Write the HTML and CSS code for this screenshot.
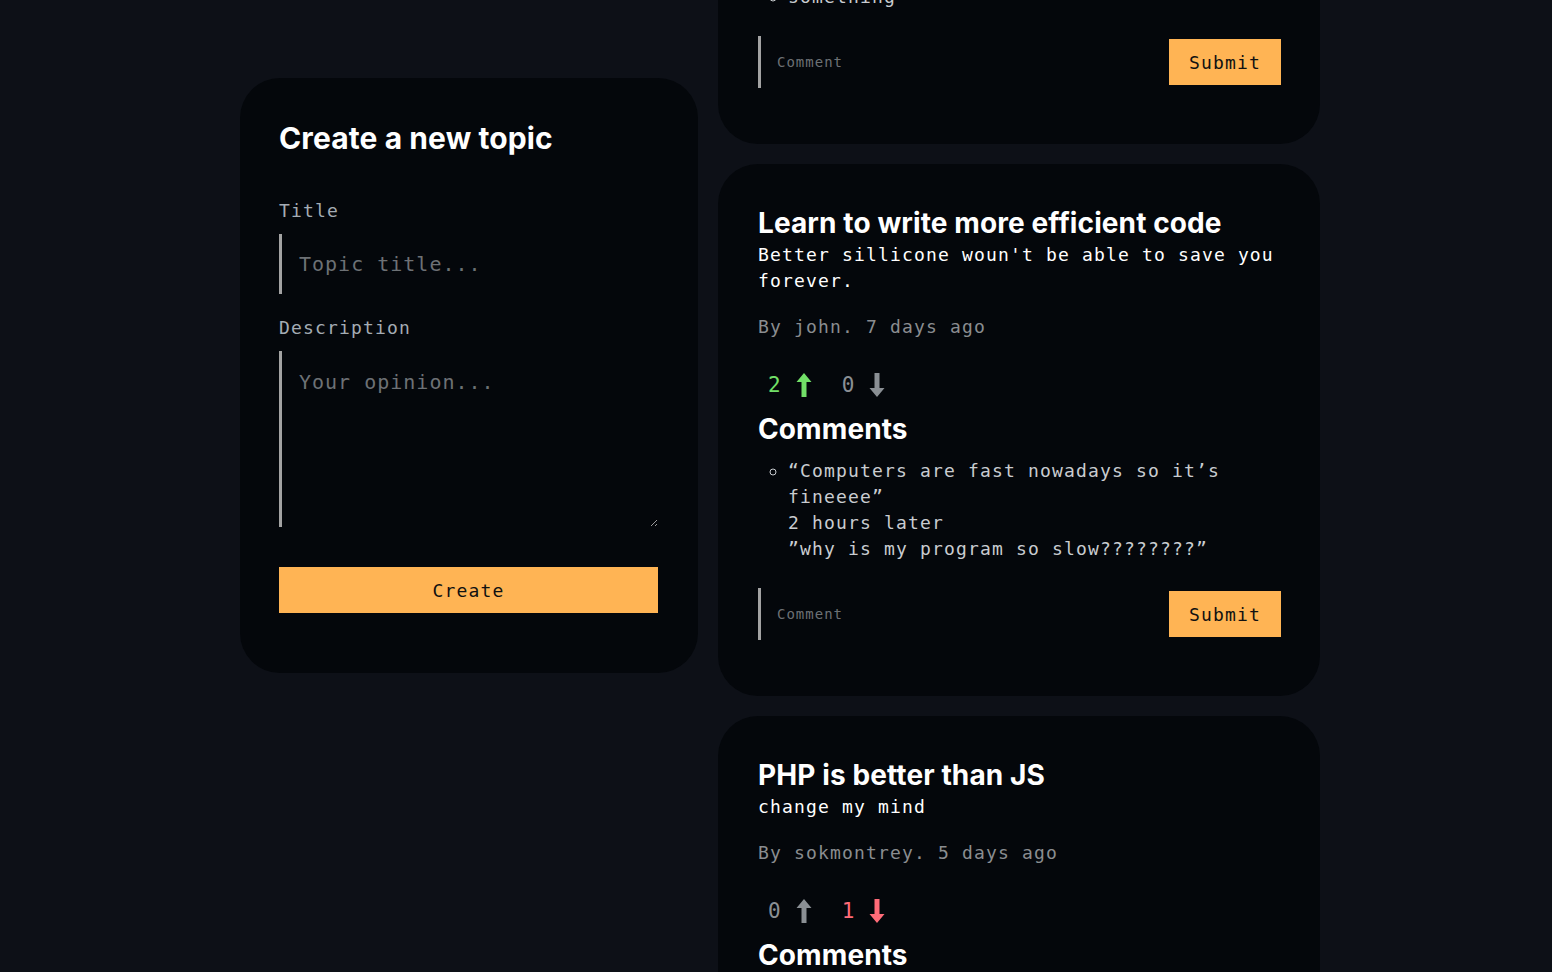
FILE: index.html
```html
<!DOCTYPE html>
<html lang="en">
<head>
<meta charset="utf-8">
<title>Topics</title>
<link rel="stylesheet" href="styles.css">
</head>
<body>
<main class="layout">
  <aside class="card create-card">
    <h2 class="create-title">Create a new topic</h2>
    <form class="create-form">
      <label class="field-label" for="t-title">Title</label>
      <input class="field-input" id="t-title" type="text" placeholder="Topic title...">
      <label class="field-label field-label-gap" for="t-desc">Description</label>
      <textarea class="field-textarea" id="t-desc" placeholder="Your opinion..."></textarea>
      <button class="btn btn-create" type="button">Create</button>
    </form>
  </aside>

  <section class="topics">
    <article class="card topic">
      <h2 class="topic-title">Tabs or spaces?</h2>
      <p class="topic-desc">Settle it once and for all.</p>
      <p class="topic-meta">By anna. 9 days ago</p>
      <div class="votes">
        <button class="vote vote-up" type="button"><span class="vote-count">3</span>
          <svg class="arrow" viewBox="0 0 16 24"><path d="M8 0 L15.5 9 H10.5 V24 H5.5 V9 H0.5 Z"/></svg></button>
        <button class="vote" type="button"><span class="vote-count">0</span>
          <svg class="arrow" viewBox="0 0 16 24"><path d="M8 24 L15.5 15 H10.5 V0 H5.5 V15 H0.5 Z"/></svg></button>
      </div>
      <h3 class="comments-title">Comments</h3>
      <ul class="comments">
        <li>something</li>
      </ul>
      <form class="comment-form">
        <input class="comment-input" type="text" placeholder="Comment">
        <button class="btn btn-submit" type="button">Submit</button>
      </form>
    </article>

    <article class="card topic">
      <h2 class="topic-title">Learn to write more efficient code</h2>
      <p class="topic-desc">Better sillicone woun't be able to save you forever.</p>
      <p class="topic-meta">By john. 7 days ago</p>
      <div class="votes">
        <button class="vote vote-up" type="button"><span class="vote-count">2</span>
          <svg class="arrow" viewBox="0 0 16 24"><path d="M8 0 L15.5 9 H10.5 V24 H5.5 V9 H0.5 Z"/></svg></button>
        <button class="vote" type="button"><span class="vote-count">0</span>
          <svg class="arrow" viewBox="0 0 16 24"><path d="M8 24 L15.5 15 H10.5 V0 H5.5 V15 H0.5 Z"/></svg></button>
      </div>
      <h3 class="comments-title">Comments</h3>
      <ul class="comments">
        <li>“Computers are fast nowadays so it’s fineeee”
2 hours later
”why is my program so slow????????”</li>
      </ul>
      <form class="comment-form">
        <input class="comment-input" type="text" placeholder="Comment">
        <button class="btn btn-submit" type="button">Submit</button>
      </form>
    </article>

    <article class="card topic">
      <h2 class="topic-title">PHP is better than JS</h2>
      <p class="topic-desc">change my mind</p>
      <p class="topic-meta">By sokmontrey. 5 days ago</p>
      <div class="votes">
        <button class="vote" type="button"><span class="vote-count">0</span>
          <svg class="arrow" viewBox="0 0 16 24"><path d="M8 0 L15.5 9 H10.5 V24 H5.5 V9 H0.5 Z"/></svg></button>
        <button class="vote vote-down" type="button"><span class="vote-count">1</span>
          <svg class="arrow" viewBox="0 0 16 24"><path d="M8 24 L15.5 15 H10.5 V0 H5.5 V15 H0.5 Z"/></svg></button>
      </div>
      <h3 class="comments-title">Comments</h3>
      <ul class="comments">
        <li>“Just use Laravel”</li>
      </ul>
      <form class="comment-form">
        <input class="comment-input" type="text" placeholder="Comment">
        <button class="btn btn-submit" type="button">Submit</button>
      </form>
    </article>
  </section>
</main>
</body>
</html>
```

FILE: styles.css
```css
* { box-sizing: border-box; }

html, body {
  margin: 0;
  padding: 0;
  background: #0d1017;
  height: 100%;
  overflow: hidden;
}

body {
  font-family: "DejaVu Sans Mono", "Liberation Mono", monospace;
  color: #ffffff;
}

.layout {
  display: grid;
  grid-template-columns: 458px 602px;
  column-gap: 20px;
  align-items: start;
  margin-left: 240px;
}

.card {
  background: #04070b;
  border-radius: 40px;
  padding: 40px;
}

/* ---------- create card ---------- */
.create-card {
  margin-top: 78px;
  padding: 40px 40px 60px 39px;
}

.create-title {
  font-family: Inter, "Noto Sans", sans-serif;
  font-weight: 700;
  font-size: 30px;
  letter-spacing: 0.1px;
  line-height: 40px;
  margin: 0 0 40px;
}

.create-form {
  display: flex;
  flex-direction: column;
}

.field-label {
  font-size: 18px;
  letter-spacing: 1.16px;
  line-height: 26px;
  color: #a4acb4;
  margin-bottom: 10px;
}

.field-label-gap { margin-top: 21px; }

.field-input,
.field-textarea,
.comment-input {
  background: transparent;
  border: none;
  border-left: 3px solid #a3a3a3;
  color: #ffffff;
  font-family: "DejaVu Sans Mono", "Liberation Mono", monospace;
  outline: none;
}

.field-input {
  height: 60px;
  font-size: 20px;
  letter-spacing: 1px;
  padding: 0 0 0 17px;
}

.field-textarea {
  height: 176px;
  font-size: 20px;
  letter-spacing: 1px;
  line-height: 26px;
  padding: 18px 0 0 17px;
  resize: vertical;
}

.field-input::placeholder,
.field-textarea::placeholder,
.comment-input::placeholder {
  color: #6d7175;
}

.btn {
  background: #ffb454;
  border: none;
  color: #111111;
  font-family: "DejaVu Sans Mono", "Liberation Mono", monospace;
  font-size: 18px;
  letter-spacing: 1.16px;
  cursor: pointer;
}

.btn-create {
  margin-top: 40px;
  height: 46px;
  width: 379px;
}

/* ---------- topics ---------- */
.topics {
  display: flex;
  flex-direction: column;
  gap: 20px;
  margin-top: -284px;
}

.topic {
  padding: 40px 39px 56px 40px;
}

.topic-title {
  font-family: Inter, "Noto Sans", sans-serif;
  font-weight: 700;
  font-size: 28px;
  letter-spacing: 0.1px;
  line-height: 38px;
  margin: 0;
}

.topic-desc {
  margin: 0;
  font-size: 18px;
  letter-spacing: 1.16px;
  line-height: 26px;
  color: #ffffff;
}

.topic-meta {
  margin: 20px 0 0;
  font-size: 18px;
  letter-spacing: 1.16px;
  line-height: 26px;
  color: #8a8d90;
}

.votes {
  display: flex;
  gap: 10px;
  margin-top: 28px;
}

.vote {
  display: inline-flex;
  align-items: center;
  gap: 15px;
  height: 34px;
  padding: 0 10px;
  background: transparent;
  border: none;
  color: #8a8f94;
  font-family: "DejaVu Sans Mono", "Liberation Mono", monospace;
  font-size: 21px;
  cursor: pointer;
}

.vote .arrow {
  width: 16px;
  height: 24px;
  fill: currentColor;
}

.vote-up { color: #72e068; }
.vote-down { color: #ff6b78; }

.comments-title {
  font-family: Inter, "Noto Sans", sans-serif;
  font-weight: 700;
  font-size: 28px;
  letter-spacing: 0.1px;
  line-height: 38px;
  margin: 8px 0 0;
}

.comments {
  list-style: circle;
  margin: 10px 0 0;
  padding-left: 30px;
  font-size: 18px;
  letter-spacing: 1.16px;
  line-height: 26px;
  color: #c9ccd0;
}

.comments li {
  white-space: pre-line;
}

.comment-form {
  display: flex;
  align-items: center;
  gap: 20px;
  margin-top: 26px;
}

.comment-input {
  flex: 1;
  height: 52px;
  font-size: 14px;
  letter-spacing: 1px;
  padding: 0 0 0 16px;
}

.btn-submit {
  width: 112px;
  height: 46px;
  font-size: 18px;
}
```
